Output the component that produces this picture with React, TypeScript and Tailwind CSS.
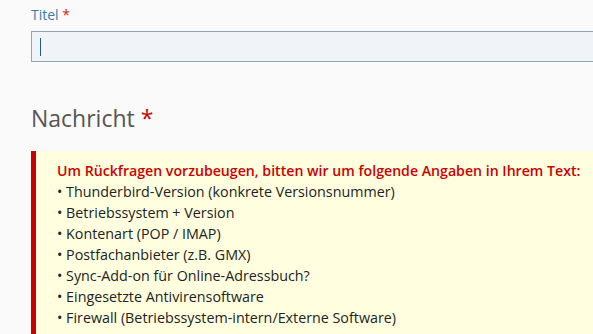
export default function App() {
  const items = [
    'Thunderbird-Version (konkrete Versionsnummer)',
    'Betriebssystem + Version',
    'Kontenart (POP / IMAP)',
    'Postfachanbieter (z.B. GMX)',
    'Sync-Add-on für Online-Adressbuch?',
    'Eingesetzte Antivirensoftware',
    'Firewall (Betriebssystem-intern/Externe Software)',
  ];

  return (
    <div
      className="w-[593px] h-[334px] overflow-hidden bg-[#fafafa] pl-[31px]"
      style={{ fontFamily: '"Open Sans", sans-serif' }}
    >
      {/* Titel */}
      <div className="pt-[5px] text-[14px] leading-[20px] text-[#3b7aa5]">
        Titel <span className="text-[#d42424]">*</span>
      </div>
      <div className="mt-[6px] h-[31px] border border-r-0 border-[#8ba6bb] bg-[#f0f4f9] flex items-center pl-[8px]">
        <div className="w-px h-[18px] bg-[#1b5e8e]" />
      </div>

      {/* Nachricht */}
      <h2 className="mt-[40px] text-[23px] leading-[32px] font-normal text-[#555555]">
        Nachricht <span className="text-[#cc0000]">*</span>
      </h2>

      <div className="mt-[17px] border-l-[5px] border-[#cc0000] bg-[#ffffe0] pl-[21px] pt-[9px] pb-[12px] text-[14.3px] leading-[21px]">
        <div className="font-semibold text-[14.15px] text-[#cc0000]">
          Um Rückfragen vorzubeugen, bitten wir um folgende Angaben in Ihrem Text:
        </div>
        {items.map((it) => (
          <div key={it} className="text-[#222222]">
            • {it}
          </div>
        ))}
      </div>
    </div>
  );
}
